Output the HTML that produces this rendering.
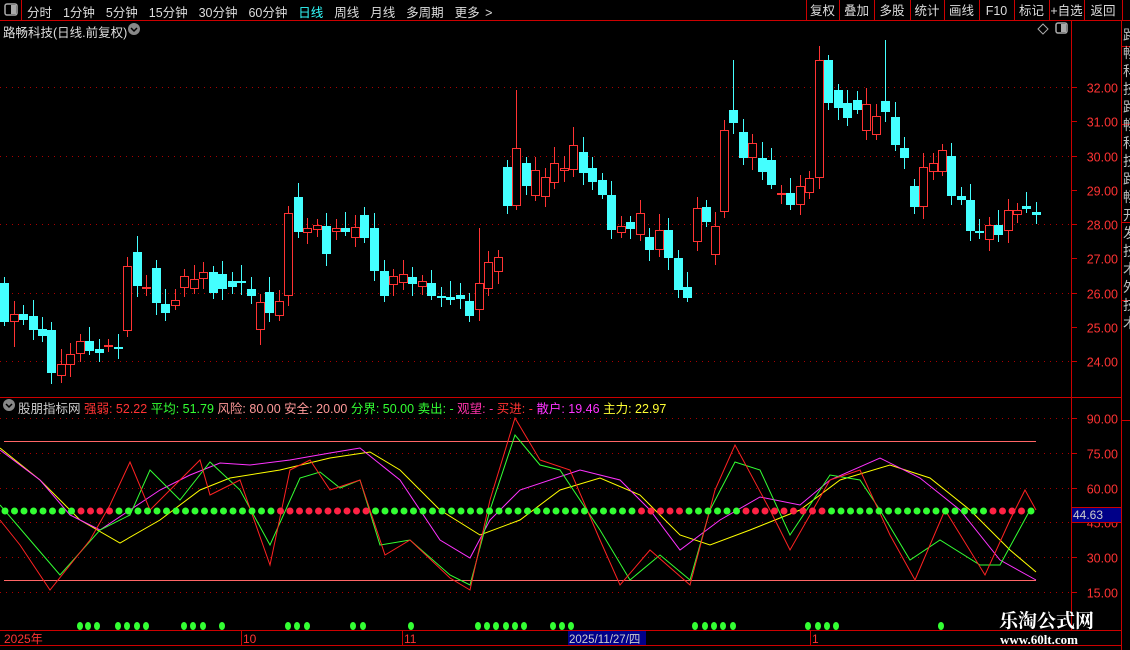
<!DOCTYPE html>
<html><head><meta charset="utf-8">
<style>
*{margin:0;padding:0;box-sizing:border-box}
body{width:1130px;height:650px;background:#000;overflow:hidden;font-family:"Liberation Sans","Noto Sans CJK SC",sans-serif;color:#ccc;position:relative}
.a{position:absolute;white-space:nowrap}
</style></head><body>
<svg id="s" width="1130" height="650" style="position:absolute;left:0;top:0" xmlns="http://www.w3.org/2000/svg"></svg>
<div class="a" style="left:27px;top:2px;font-size:12.5px;color:#ddd;word-spacing:2px">分时&nbsp; 1分钟&nbsp; 5分钟&nbsp; 15分钟&nbsp; 30分钟&nbsp; 60分钟&nbsp; <span style="color:#3ff">日线</span>&nbsp; 周线&nbsp; 月线&nbsp; 多周期&nbsp; 更多 &gt;</div>
<div class="a" style="left:3px;top:22px;font-size:12.5px;color:#ddd">路畅科技(日线.前复权)</div>
<div class="a" style="left:18px;top:398px;font-size:12.5px;color:#ccc">股朋指标网 <span style="color:#f33">强弱: 52.22</span> <span style="color:#3f3">平均: 51.79</span> <span style="color:#f99">风险: 80.00</span> <span style="color:#f99">安全: 20.00</span> <span style="color:#3f3">分界: 50.00</span> <span style="color:#3f3">卖出: -</span> <span style="color:#f3a">观望: -</span> <span style="color:#f33">买进: -</span> <span style="color:#f3f">散户: 19.46</span> <span style="color:#ff3">主力: 22.97</span></div>
<div class="a" style="left:999px;top:606px;font-size:19px;font-weight:bold;color:#fff;font-family:'Noto Serif CJK SC',serif">乐淘公式网</div>
<div class="a" style="left:1000px;top:632px;font-size:13px;font-weight:bold;color:#fff;font-family:'Liberation Serif',serif">www.60lt.com</div>
<script>
const S=document.getElementById('s');let h='';
const L=(x1,y1,x2,y2,c,w,d)=>h+=`<line x1="${x1}" y1="${y1}" x2="${x2}" y2="${y2}" stroke="${c}" stroke-width="${w||1}" ${d?'stroke-dasharray="'+d+'"':''}/>`;
const T=(x,y,t,c,s,a)=>h+=`<text x="${x}" y="${y}" fill="${c}" font-size="${s||12}" ${a?'text-anchor="'+a+'"':''} font-family="Liberation Sans,Noto Sans CJK SC,sans-serif">${t}</text>`;
const R='#c00';
L(0,20.5,1130,20.5,R);L(21.5,0,21.5,20,R);
const bx=[806,839,874,910,944,979,1014,1049,1084,1122],bl=['复权','叠加','多股','统计','画线','F10','标记','+自选','返回'];
bx.forEach(x=>L(x+.5,0,x+.5,20,R));
bl.forEach((t,i)=>T((bx[i]+bx[i+1])/2,15,t,'#ddd',12.5,'middle'));
h+=`<rect x="5" y="4" width="12" height="11" rx="2" fill="none" stroke="#aaa" stroke-width="1.5"/><rect x="11" y="5" width="5" height="9" fill="#aaa"/>`;
h+=`<rect x="1056" y="23" width="11" height="10" rx="2" fill="none" stroke="#aaa" stroke-width="1.5"/><rect x="1061" y="24" width="5" height="8" fill="#aaa"/>`;
h+=`<path d="M1043 24 L1048 29 L1043 34 L1038 29Z" fill="none" stroke="#aaa"/>`;
h+=`<circle cx="134" cy="29" r="6" fill="#888"/><path d="M131 28 L134 31 L137 28" fill="none" stroke="#000" stroke-width="1.5"/>`;
h+=`<circle cx="9" cy="405" r="6" fill="#888"/><path d="M6 404 L9 407 L12 404" fill="none" stroke="#000" stroke-width="1.5"/>`;
L(1071.5,20,1071.5,630,R);L(1121.5,20,1121.5,650,R);L(0,397.5,1122,397.5,R);L(0,630.5,1122,630.5,R);L(0,645.5,1122,645.5,R);
[46,124,222,300,420].forEach(y=>L(1122,y+.5,1130,y+.5,R));
'路畅科技路畅科技路畅开发技术外技术'.split('').forEach((c,i)=>T(1123,40+i*18,c,'#bbb',14));
[32,31,30,29,28,27,26,25,24].forEach(p=>{const y=Math.round(87+(32-p)*34.25)+.5;if(p%2==0)L(0,y,1070,y,'#a00',1,'1 5');L(1071,y,1077,y,R);T(1118,y+5,p.toFixed(2),'#f33',12.5,'end');});
[90,75,60,45,30,15].forEach(v=>{const y=Math.round(418+(90-v)*2.32)+.5;L(0,y,1070,y,'#a00',1,'1 5');L(1071,y,1077,y,R);T(1118,y+5,v.toFixed(2),'#f33',12.5,'end');});
const C=[[4,283,322,0],[14,314,322,1],[23,314,320,0],[33,316,330,0],[42,329,336,0],[51,330,373,0],[61,364,376,1],[70,354,365,1],[80,341,354,1],[89,341,351,0],[99,349,353,0],[108,345,347,1],[118,347,349,0],[127,266,331,1],[137,252,286,0],[146,287,289,1],[156,268,303,0],[165,304,313,0],[175,300,306,1],[184,276,288,1],[194,279,289,1],[203,272,279,1],[213,272,293,0],[222,274,289,0],[232,281,287,0],[241,281,283,0],[251,289,296,0],[260,302,330,1],[269,292,313,0],[279,301,316,1],[288,213,296,1],[298,197,232,0],[307,228,233,1],[317,225,230,1],[326,226,254,0],[336,228,232,1],[345,228,232,0],[355,227,238,1],[364,215,238,0],[374,228,271,0],[384,271,296,0],[393,276,285,1],[403,274,283,1],[412,277,284,0],[422,281,287,1],[431,283,296,0],[441,296,298,0],[450,297,300,0],[460,295,299,0],[469,301,316,0],[479,283,310,1],[488,262,289,1],[498,257,272,1],[507,167,206,0],[516,148,206,1],[526,163,186,0],[535,170,196,1],[545,177,197,1],[554,163,183,1],[564,168,171,1],[573,145,170,1],[583,152,173,0],[592,168,182,0],[602,180,195,0],[611,195,230,0],[621,226,233,1],[630,222,229,0],[640,213,235,1],[649,237,250,0],[659,230,250,1],[668,230,258,0],[678,258,290,0],[687,287,298,0],[697,208,242,1],[706,207,222,0],[715,226,255,1],[724,130,212,1],[733,110,123,0],[743,132,158,0],[752,143,158,1],[762,158,172,0],[771,160,185,0],[781,193,195,1],[790,193,205,0],[800,186,205,1],[809,178,193,1],[819,60,178,1],[828,60,103,0],[838,90,108,0],[847,103,118,0],[857,100,110,0],[866,104,131,1],[876,116,135,1],[885,101,112,0],[895,117,145,0],[904,148,158,0],[914,186,207,0],[923,167,207,1],[933,163,172,1],[942,150,172,1],[951,156,196,0],[961,196,200,0],[970,200,231,0],[979,231,233,0],[989,225,240,1],[998,225,235,0],[1008,210,231,1],[1017,210,215,1],[1026,206,209,0],[1036,212,215,0]];
const hi={516:90,573:127,733:60,828:55,885:40,724:130,479:228,507:160,260:345,14:347};
C.forEach(([x,t,b,r],i)=>{const c=r?'#f33':'#4ff';const wt=(hi[x]!==undefined&&hi[x]<t)?hi[x]:t-6-(i*7%11);const wb=(hi[x]!==undefined&&hi[x]>b)?hi[x]:b+4+(i*5%9);L(x+.5,wt,x+.5,wb,c);
if(r)h+=`<rect x="${x-3.5}" y="${t+.5}" width="8" height="${Math.max(b-t-1,1)}" fill="#000" stroke="${c}"/>`;else h+=`<rect x="${x-4}" y="${t}" width="9" height="${Math.max(b-t,2)}" fill="${c}"/>`;});
L(4,441.5,1036,441.5,'#f66');L(4,580.5,1036,580.5,'#f66');
const P=(a,c)=>{let p='';for(let i=0;i<a.length;i+=2)p+=a[i]+','+a[i+1]+' ';h+=`<polyline points="${p}" fill="none" stroke="${c}" stroke-width="1"/>`;};
P([0,448,40,480,80,520,120,543,160,520,200,490,230,478,280,470,330,458,370,452,400,470,440,510,480,535,520,520,560,490,600,478,640,495,680,535,710,545,750,530,800,510,840,480,890,465,930,478,970,510,1010,550,1036,572],'#ff0');
P([0,450,40,480,70,515,100,530,130,510,160,490,190,475,220,463,250,465,290,460,330,453,360,448,400,480,440,540,470,558,490,520,520,490,580,470,620,480,650,510,680,550,720,520,760,497,800,505,830,480,880,458,920,478,960,510,1000,560,1036,580],'#f3f');
P([0,505,30,540,60,575,100,530,130,515,150,470,180,500,210,462,240,490,270,545,300,478,320,472,340,488,360,480,380,545,410,540,450,575,470,585,490,510,515,435,540,465,560,470,600,530,630,580,660,555,690,580,710,510,735,462,760,470,790,535,830,475,860,480,880,510,910,560,940,540,980,565,1000,565,1030,510],'#3f3');
P([0,520,20,545,50,590,90,540,110,505,130,462,150,510,180,480,200,460,210,495,240,480,270,565,290,470,310,460,330,490,360,480,385,555,410,540,450,578,470,590,490,500,515,418,540,460,570,470,600,540,620,585,650,550,690,585,715,490,735,445,770,510,790,550,830,480,860,470,890,535,915,580,945,510,985,575,1010,520,1025,490,1036,510],'#f22');
for(let x=5;x<=1036;x+=9.5){const g=((x>80&&x<110)||(x>280&&x<370)||(x>640&&x<680)||(x>740&&x<830)||(x>990&&x<1030));h+=`<circle cx="${x}" cy="511" r="3.5" fill="${g?'#f24':'#3f3'}"/>`;}
[80,88,97,118,127,137,146,184,193,203,222,288,297,307,353,363,411,478,487,496,506,515,524,553,562,571,695,705,714,723,733,808,818,827,836,941].forEach(x=>h+=`<ellipse cx="${x}" cy="626" rx="3" ry="4" fill="#3f3"/>`);
h+=`<rect x="1071.5" y="507.5" width="50" height="15" fill="#008" stroke="#c00"/>`;T(1073,519,'44.63','#ccc',12);
[241,402,810].forEach(x=>L(x+.5,631,x+.5,645,R));
T(4,643,'2025年','#f33',12);T(243,643,'10','#f33',12);T(404,643,'11','#f33',12);T(812,643,'1','#f33',12);
h+=`<rect x="568" y="631" width="78" height="14" fill="#008"/>`;T(569,643,'2025/11/27/四','#ccc',11.5);
S.innerHTML=h;
</script>
</body></html>
